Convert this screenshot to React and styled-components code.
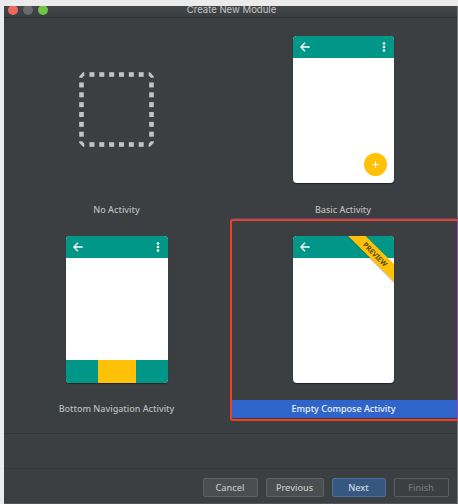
import React from "react";
import styled, { createGlobalStyle } from "styled-components";

const teal = "#009688";
const amber = "#ffc107";

const GlobalStyle = createGlobalStyle`
  * { box-sizing: border-box; }
  body { margin: 0; background: #ebebeb; }
`;

const Page = styled.main`
  width: 458px;
  height: 504px;
  padding: 6px 0 0 4px;
  background: #ebebeb;
  overflow: hidden;
  font-family: "Noto Sans", "Open Sans", sans-serif;
`;

const Window = styled.section`
  display: flex;
  flex-direction: column;
  width: 454px;
  height: 498px;
  background: #3c3f41;
  border-right: 1px solid #75787a;
  border-bottom: 1px solid #55585a;
`;

const TitleBar = styled.header`
  display: grid;
  grid-template-columns: 60px 1fr 58px;
  flex: none;
  height: 12px;
  background: linear-gradient(#45484a, #3b3e40);
  border-bottom: 1px solid #2c2e2f;
`;

const Lights = styled.div`
  display: flex;
  gap: 5px;
  height: 11px;
  padding-left: 4px;
  overflow: hidden;
`;

const Light = styled.span`
  width: 10px;
  height: 10px;
  margin-top: -1px;
  border-radius: 50%;
  background: ${(p) => p.$color};
`;

const Title = styled.h1`
  margin: -2px 0 0;
  font: 400 9.6px/12px Inter, sans-serif;
  letter-spacing: -0.03px;
  color: #c3c4c4;
  text-align: center;
  white-space: nowrap;
`;

const Gallery = styled.div`
  display: grid;
  grid-template-columns: 226px 227px;
  grid-template-rows: 201px 201px;
  flex: none;
  height: 416px;
  border-bottom: 1px solid #343638;
`;

const Card = styled.article`
  position: relative;
  display: flex;
  flex-direction: column;
  align-items: center;
  padding-top: ${(p) => p.$top}px;
`;

const SelectionFrame = styled.span`
  position: absolute;
  inset: 0 -1px -1px 0;
  border: 2px solid #ef4023;
  border-right: 1px solid #9b4bb5;
  border-radius: 3px 0 0 3px;
  box-shadow: 0 -1px 0 #3e4a80;
`;

const Label = styled.div`
  align-self: stretch;
  height: 18px;
  margin: ${(p) => p.$gap}px 0 0 ${(p) => (p.$selected ? 2 : 0)}px;
  padding-right: ${(p) => (p.$selected ? 2 : 1)}px;
  background: ${(p) => (p.$selected ? "#2f65ca" : "transparent")};
  color: ${(p) => (p.$selected ? "#f0f2f8" : "#bbbdbe")};
  font-size: 9px;
  font-weight: 500;
  line-height: 18px;
  text-align: center;
  white-space: nowrap;
`;

const Phone = styled.div`
  position: relative;
  display: flex;
  flex-direction: column;
  width: ${(p) => p.$width || 101}px;
  height: 147px;
  background: #fff;
  border-radius: 4px;
  overflow: hidden;
`;

const PhoneShadow = styled.div`
  border-radius: 4px;
  box-shadow: 0 1px 1px 0 #202324;
`;

const AppBar = styled.div`
  display: flex;
  justify-content: space-between;
  align-items: center;
  flex: none;
  height: 22px;
  padding: 0 7px;
  background: ${teal};
`;

const Space = styled.div`
  flex: 1;
`;

const BottomNav = styled.div`
  display: grid;
  grid-template-columns: 32px 38px 32px;
  height: 23px;
  background: ${teal};
`;

const ActiveTab = styled.span`
  grid-column: 2;
  background: ${amber};
`;

const Fab = styled.div`
  position: absolute;
  right: 7px;
  bottom: 7px;
  display: grid;
  place-items: center;
  width: 23px;
  height: 23px;
  border-radius: 50%;
  background: ${amber};
`;

const Ribbon = styled.svg`
  position: absolute;
  top: 0;
  right: 0;
`;

const Strip = styled.div`
  flex: none;
  height: 35px;
  border-bottom: 1px solid #343638;
`;

const Footer = styled.footer`
  display: flex;
  gap: 8px;
  justify-content: flex-end;
  padding: 9px 8px 0 0;
`;

const kinds = {
  normal: { bg: "#4a4e50", line: "#5e6163", ink: "#c2c4c5" },
  primary: { bg: "#365880", line: "#4a6f9e", ink: "#d0d7df" },
  disabled: { bg: "#3c3f41", line: "#5a5d5f", ink: "#74777a" },
};

const Button = styled.button`
  width: ${(p) => p.$width}px;
  height: 19px;
  padding: 0 1px 0 0;
  background: ${(p) => kinds[p.$kind].bg};
  border: 1px solid ${(p) => kinds[p.$kind].line};
  border-radius: 2px;
  color: ${(p) => kinds[p.$kind].ink};
  font: 500 9.1px/17px "Noto Sans", sans-serif;
`;

const BackIcon = () => (
  <svg width="10" height="10" viewBox="0 0 10 10" fill="none" stroke="#fff" strokeWidth="1.3">
    <path d="M5 0.8 0.9 5 5 9.2M1 5h8.7" />
  </svg>
);

const MoreIcon = () => (
  <svg width="5" height="10" viewBox="0 0 5 10" fill="#fff">
    <circle cx="2" cy="1.5" r="1.3" />
    <circle cx="2" cy="5" r="1.3" />
    <circle cx="2" cy="8.5" r="1.3" />
  </svg>
);

const steps = [1, 2, 3, 4, 5, 6];

const EmptyIcon = () => (
  <svg width="76" height="76" viewBox="0 0 76 76" fill="#c4c4c4">
    {steps.map((n) => {
      const at = n * 9.85 + 0.6;
      return (
        <g key={n}>
          <rect x={at} y="0.2" width="5" height="4.6" />
          <rect x={at} y="70.2" width="5" height="4.6" />
          <rect x="0.2" y={at} width="4.6" height="5" />
          <rect x="70.2" y={at} width="4.6" height="5" />
        </g>
      );
    })}
    <path d="M.2 5.7V4.4L4 .2H5.3V3.2L3.2 5.7Z" />
    <path d="M69.7.2H71L74.8 4.4V5.7H71.8L69.7 3.2Z" />
    <path d="M.2 69.3H3.2L5.3 71.8V74.8H4L.2 70.8Z" />
    <path d="M74.8 69.3V70.8L71 74.8H69.7V71.8L71.8 69.3Z" />
  </svg>
);

const PlusIcon = () => (
  <svg width="7" height="7" viewBox="0 0 7 7" stroke="#fff" strokeWidth="1.1">
    <path d="M3.5 0.3v6.4M.3 3.5h6.4" />
  </svg>
);

const PreviewRibbon = () => (
  <Ribbon width="47" height="47" viewBox="0 0 47 47">
    <path d="M0 0 47 47V45.5L2 0Z" fill="#000" opacity=".25" />
    <path d="M1 0H18.5L47 28V45.5Z" fill={amber} />
    <text
      transform="translate(28 18.5) rotate(45)"
      y="2.4"
      textAnchor="middle"
      fontFamily="Noto Sans, sans-serif"
      fontSize="7.1"
      fontWeight="600"
      fill="#453609"
    >
      PREVIEW
    </text>
  </Ribbon>
);

export default function App() {
  return (
    <Page>
      <GlobalStyle />
      <Window>
        <TitleBar>
          <Lights>
            <Light $color="#ee6a5f" />
            <Light $color="#67696b" />
            <Light $color="#71c247" />
          </Lights>
          <Title>Create New Module</Title>
        </TitleBar>
        <Gallery>
          <Card $top={54}>
            <EmptyIcon />
            <Label $gap={53}>No Activity</Label>
          </Card>
          <Card $top={18}>
            <PhoneShadow>
              <Phone>
                <AppBar>
                  <BackIcon />
                  <MoreIcon />
                </AppBar>
                <Fab>
                  <PlusIcon />
                </Fab>
              </Phone>
            </PhoneShadow>
            <Label $gap={18}>Basic Activity</Label>
          </Card>
          <Card $top={17}>
            <PhoneShadow>
              <Phone $width={102}>
                <AppBar>
                  <BackIcon />
                  <MoreIcon />
                </AppBar>
                <Space />
                <BottomNav>
                  <ActiveTab />
                </BottomNav>
              </Phone>
            </PhoneShadow>
            <Label $gap={17}>Bottom Navigation Activity</Label>
          </Card>
          <Card $top={17}>
            <PhoneShadow>
              <Phone>
                <AppBar>
                  <BackIcon />
                </AppBar>
                <PreviewRibbon />
              </Phone>
            </PhoneShadow>
            <Label $gap={17} $selected>
              Empty Compose Activity
            </Label>
            <SelectionFrame />
          </Card>
        </Gallery>
        <Strip />
        <Footer>
          <Button $width={55} $kind="normal">Cancel</Button>
          <Button $width={58} $kind="normal">Previous</Button>
          <Button $width={54} $kind="primary">Next</Button>
          <Button $width={55} $kind="disabled">Finish</Button>
        </Footer>
      </Window>
    </Page>
  );
}
